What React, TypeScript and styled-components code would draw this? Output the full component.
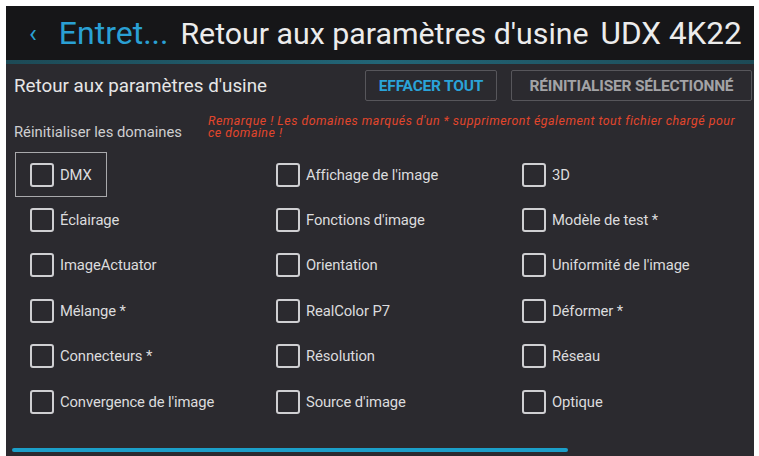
import styled, { createGlobalStyle } from 'styled-components';

const GlobalStyle = createGlobalStyle`
  html, body {
    margin: 0;
    background: #ffffff;
  }
  body {
    font-family: Roboto, 'Liberation Sans', sans-serif;
  }
`;

const Frame = styled.div`
  margin: 6px 5px 0 6px;
  height: 450px;
  background: #2b2a2f;
  display: flex;
  flex-direction: column;
  overflow: hidden;
`;

const Header = styled.header`
  height: 54px;
  flex-shrink: 0;
  background: #161618;
  display: flex;
  align-items: center;
  padding-left: 23px;
  font-size: 30.3px;
  color: #ececec;
  white-space: nowrap;
`;

const Back = styled.span`
  color: #2aa0d4;
  margin-right: 22px;
  font-size: 26px;
`;

const Crumb = styled.span`
  color: #2aa0d4;
  margin-right: 12px;
  font-size: 32px;
`;

const Model = styled.span`
  margin-left: 12px;
  font-size: 31.5px;
`;

const Divider = styled.div`
  height: 4px;
  flex-shrink: 0;
  background: linear-gradient(to right, #1d4a56, #226577 50%, #1d4a56);
`;

const Body = styled.div`
  flex: 1;
  display: flex;
  flex-direction: column;
  padding: 0 2px 0 8px;
`;

const Toolbar = styled.div`
  height: 39px;
  display: flex;
  align-items: center;
  justify-content: space-between;
  padding-top: 2px;
`;

const SectionTitle = styled.h2`
  margin: 0;
  font-size: 18.8px;
  font-weight: 400;
  color: #e6e6e6;
`;

const Actions = styled.div`
  display: flex;
  gap: 14px;
`;

const ActionButton = styled.button<{ $primary?: boolean }>`
  height: 31px;
  width: ${(p) => (p.$primary ? '132px' : '241px')};
  padding: 0;
  background: transparent;
  border: 1.5px solid #57565b;
  border-radius: 2px;
  font-family: Roboto, 'Liberation Sans', sans-serif;
  font-size: 15.5px;
  font-weight: 700;
  letter-spacing: -0.2px;
  color: ${(p) => (p.$primary ? '#2aa3d8' : '#a3a3a6')};
`;

const NoteRow = styled.div`
  display: flex;
  align-items: center;
  height: 44px;
`;

const NoteLabel = styled.span`
  width: 194px;
  flex-shrink: 0;
  font-size: 14.8px;
  color: #cfcfd1;
  padding-top: 10px;
`;

const Remark = styled.p`
  margin: 0;
  width: 542px;
  font-size: 12.4px;
  line-height: 12px;
  letter-spacing: 0.5px;
  font-style: italic;
  color: #e2462c;
`;

const Grid = styled.div`
  margin-top: 3px;
  display: grid;
  grid-template-columns: 246px 246px 1fr;
  grid-auto-rows: 45.4px;
  padding-left: 1px;
`;

const Option = styled.label<{ $focused?: boolean }>`
  justify-self: start;
  display: flex;
  align-items: center;
  gap: 6px;
  height: 100%;
  box-sizing: border-box;
  padding: 0 14px;
  border: 1px solid ${(p) => (p.$focused ? '#a9a9ac' : 'transparent')};
  font-size: 14.8px;
  letter-spacing: -0.1px;
  color: #dcdcde;
  white-space: nowrap;
`;

const Box = styled.span`
  width: 20px;
  height: 20px;
  border: 2px solid #cfcfd2;
  border-radius: 3px;
  flex-shrink: 0;
`;

const Scrollbar = styled.div`
  margin-top: auto;
  margin-bottom: 4px;
  height: 4px;
  width: 556px;
  margin-left: -2px;
  border-radius: 2px;
  background: #1b9fc9;
`;

const options = [
  'DMX',
  "Affichage de l'image",
  '3D',
  'Éclairage',
  "Fonctions d'image",
  'Modèle de test *',
  'ImageActuator',
  'Orientation',
  "Uniformité de l'image",
  'Mélange *',
  'RealColor P7',
  'Déformer *',
  'Connecteurs *',
  'Résolution',
  'Réseau',
  "Convergence de l'image",
  "Source d'image",
  'Optique',
];

export default function App() {
  return (
    <>
      <GlobalStyle />
      <Frame>
        <Header>
          <Back>‹</Back>
          <Crumb>Entret...</Crumb>
          Retour aux paramètres d'usine
          <Model>UDX 4K22</Model>
        </Header>
        <Divider />
        <Body>
          <Toolbar>
            <SectionTitle>Retour aux paramètres d'usine</SectionTitle>
            <Actions>
              <ActionButton $primary>EFFACER TOUT</ActionButton>
              <ActionButton>RÉINITIALISER SÉLECTIONNÉ</ActionButton>
            </Actions>
          </Toolbar>
          <NoteRow>
            <NoteLabel>Réinitialiser les domaines</NoteLabel>
            <Remark>
              Remarque ! Les domaines marqués d'un * supprimeront également tout
              fichier chargé pour ce domaine !
            </Remark>
          </NoteRow>
          <Grid>
            {options.map((o, i) => (
              <Option key={o} $focused={i === 0}>
                <Box />
                {o}
              </Option>
            ))}
          </Grid>
          <Scrollbar />
        </Body>
      </Frame>
    </>
  );
}
